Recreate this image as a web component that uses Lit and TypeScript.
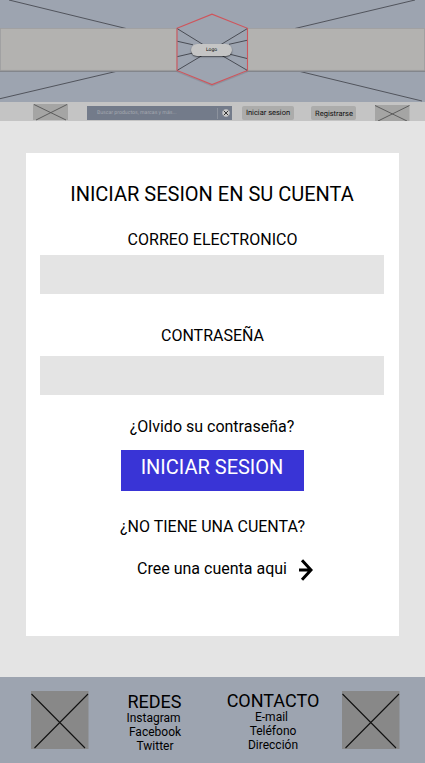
import { LitElement, html, css } from "lit";
import { customElement } from "lit/decorators.js";

@customElement("app-banner")
class AppBanner extends LitElement {
  static styles = css`
    :host { display: block; position: relative; height: 102px; background: #9da4b0; }
    .art { display: block; width: 425px; height: 102px; }
    .logo {
      position: absolute; left: 191px; top: 44px; width: 41px; height: 12px;
      border-radius: 6px; background: #c5c5c5; box-shadow: 0 1px 1.5px rgba(0, 0, 0, 0.55);
      font-size: 5px; line-height: 12px; text-align: center; color: #111; text-rendering: geometricPrecision;
    }
  `;
  render() {
    return html`
      <svg class="art" viewBox="0 0 425 102">
        <g stroke="#484b52" stroke-width="0.9" fill="none">
          <path d="M9 0L126 28.5M0 98.7L120 70.5M415 0L295 28.5M296 70.5L422 101" />
        </g>
        <rect x="0" y="70" width="425" height="2" fill="#83868c" />
        <rect x="0.5" y="28.5" width="176.5" height="41.8" fill="#b3b2b0" stroke="#a09f9e" stroke-width="0.8" />
        <rect x="247.5" y="28.5" width="177" height="41.8" fill="#b3b2b0" stroke="#a09f9e" stroke-width="0.8" />
        <path d="M177 29.5L212 15.5L247.5 29.5M177 71.7L212 85.7L247.5 71.7" fill="none" stroke="#858a96" stroke-width="1.4" opacity=".65" />
        <path d="M177 28.3L212 14.2L247.5 28.3V70.5L212 84.6L177 70.5Z" fill="#9da4b0" stroke="#cf555c" stroke-width="1.1" />
        <path d="M177.5 28.8L203 44.5M177.5 41.3L193 44.8M177.5 56.6L193 53M177.5 70.2L203 55
                 M247 28.8L221 44.5M247 40.3L229 44.3M247 58.5L229 54M247 70.2L221 55"
          stroke="#3f4249" stroke-width="0.9" fill="none" />
      </svg>
      <div class="logo">Logo</div>
    `;
  }
}

@customElement("app-nav")
class AppNav extends LitElement {
  static styles = css`
    :host {
      display: flex; box-sizing: border-box; height: 19px; padding-left: 33px; background: #c4c4c4;
      text-rendering: geometricPrecision;
    }
    .thumb { width: 35px; height: 17px; margin-top: 2px; flex: none; }
    .thumb.end { margin: 3px 0 0 19px; height: 16px; }
    .search {
      display: flex; align-items: center; box-sizing: border-box; flex: none;
      width: 145px; height: 14px; margin: 4px 0 0 19px; padding-left: 10px; background: #737b8a;
    }
    .hint { width: 120px; font-size: 5.2px; line-height: 14px; color: #a3a7af; white-space: nowrap; }
    .divider { width: 1px; height: 11px; background: #8c929d; }
    .clear { width: 8px; height: 8px; margin-left: 4px; }
    .btn {
      flex: none; box-sizing: border-box; height: 14px; margin-top: 4px; border-radius: 2px;
      background: #acacab; font-size: 7.5px; line-height: 14px; text-align: center; color: #111; white-space: nowrap;
    }
    .login { width: 52px; margin-left: 10px; }
    .signup { width: 45px; margin-left: 17px; padding-left: 1px; line-height: 15px; }
  `;
  render() {
    return html`
      <svg class="thumb" viewBox="0 0 35 17"><rect width="35" height="16" fill="#a5a5a4" /><path d="M1 .5L33 16M34 .5L3 16" stroke="#555" stroke-width=".9" /></svg>
      <div class="search">
        <span class="hint">Buscar productos, marcas y más...</span>
        <span class="divider"></span>
        <svg class="clear" viewBox="0 0 8 8"><circle cx="4" cy="4" r="3.7" fill="#c9c9c9" /><path d="M1.7 1.7L6.3 6.3M6.3 1.7L1.7 6.3" stroke="#222" stroke-width=".9" /></svg>
      </div>
      <div class="btn login">Iniciar sesion</div>
      <div class="btn signup">Registrarse</div>
      <svg class="thumb end" viewBox="0 0 35 16"><rect width="34.5" height="16" fill="#a5a5a4" /><path d="M0 .5L32 16M34.5 .5L3 16" stroke="#555" stroke-width=".9" /></svg>
    `;
  }
}

@customElement("login-card")
class LoginCard extends LitElement {
  static styles = css`
    :host {
      display: flex; flex-direction: column; align-items: center; box-sizing: border-box;
      width: 373px; height: 483px; margin: 32px 0 41px 26px; padding: 29px 15px 0 14px;
      background: #fff; font-size: 16px; line-height: 20px; white-space: nowrap;
    }
    .title { font-size: 20px; line-height: 24px; margin: 0; font-weight: 400; }
    .label { margin-top: 24px; padding-left: 1px; }
    .field { width: 344px; height: 39px; margin-top: 5px; background: #e4e4e4; }
    .second { margin-top: 32px; }
    .second + .field { margin-top: 10px; }
    .forgot { margin-top: 22px; }
    .submit {
      box-sizing: border-box; width: 183px; height: 41px; margin-top: 13px; padding: 5px 0 0;
      background: #3934d6; color: #fff; font-size: 20px; line-height: 24px; text-align: center;
    }
    .ask { margin-top: 26px; padding-left: 1px; }
    .create { display: flex; margin: 22px 0 0 26px; }
    .arrow { width: 15px; height: 22px; margin: 0 0 0 11px; }
  `;
  render() {
    return html`
      <h1 class="title">INICIAR SESION EN SU CUENTA</h1>
      <div class="label">CORREO ELECTRONICO</div>
      <div class="field"></div>
      <div class="label second">CONTRASEÑA</div>
      <div class="field"></div>
      <div class="forgot">¿Olvido su contraseña?</div>
      <div class="submit">INICIAR SESION</div>
      <div class="ask">¿NO TIENE UNA CUENTA?</div>
      <div class="create">
        <span>Cree una cuenta aqui</span>
        <svg class="arrow" viewBox="0 0 15 22"><path d="M1 11H13M4 1.2L13 11L4 20.8" fill="none" stroke="#000" stroke-width="3" /></svg>
      </div>
    `;
  }
}

@customElement("app-footer")
class AppFooter extends LitElement {
  static styles = css`
    :host { display: flex; box-sizing: border-box; height: 86px; padding: 14px 25px 0 31px; background: #9da4b0; }
    .pic { width: 58px; height: 58px; flex: none; }
    .col { display: flex; flex-direction: column; align-items: center; width: 92px; font-size: 12px; line-height: 14px; white-space: nowrap; }
    .redes { margin-left: 20px; flex: none; }
    .contacto { margin: -1px 23px 0 26px; flex: none; }
    .head { font-size: 18px; line-height: 22px; margin-bottom: -2px; }
    .redes .head { padding-right: 1px; }
    .left { margin-right: 3px; }
  `;
  private picture() {
    return html`<svg class="pic" viewBox="0 0 58 58"><rect width="57.5" height="58" fill="#888" /><path d="M.5 3L54 57M57 3L3.5 57" stroke="#111" stroke-width="1.1" /></svg>`;
  }
  render() {
    return html`
      ${this.picture()}
      <div class="col redes">
        <span class="head">REDES</span>
        <span class="left">Instagram</span>
        <span>Facebook</span>
        <span>Twitter</span>
      </div>
      <div class="col contacto">
        <span class="head">CONTACTO</span>
        <span class="left">E-mail</span>
        <span>Teléfono</span>
        <span>Dirección</span>
      </div>
      ${this.picture()}
    `;
  }
}

@customElement("app-root")
class AppRoot extends LitElement {
  static styles = css`
    :host {
      display: flex; flex-direction: column; width: 425px; height: 763px; overflow: hidden;
      background: #e4e4e4; color: #000; font-family: Roboto, "Liberation Sans", sans-serif;
    }
  `;
  render() {
    return html`
      <app-banner></app-banner>
      <app-nav></app-nav>
      <login-card></login-card>
      <app-footer></app-footer>
    `;
  }
}
